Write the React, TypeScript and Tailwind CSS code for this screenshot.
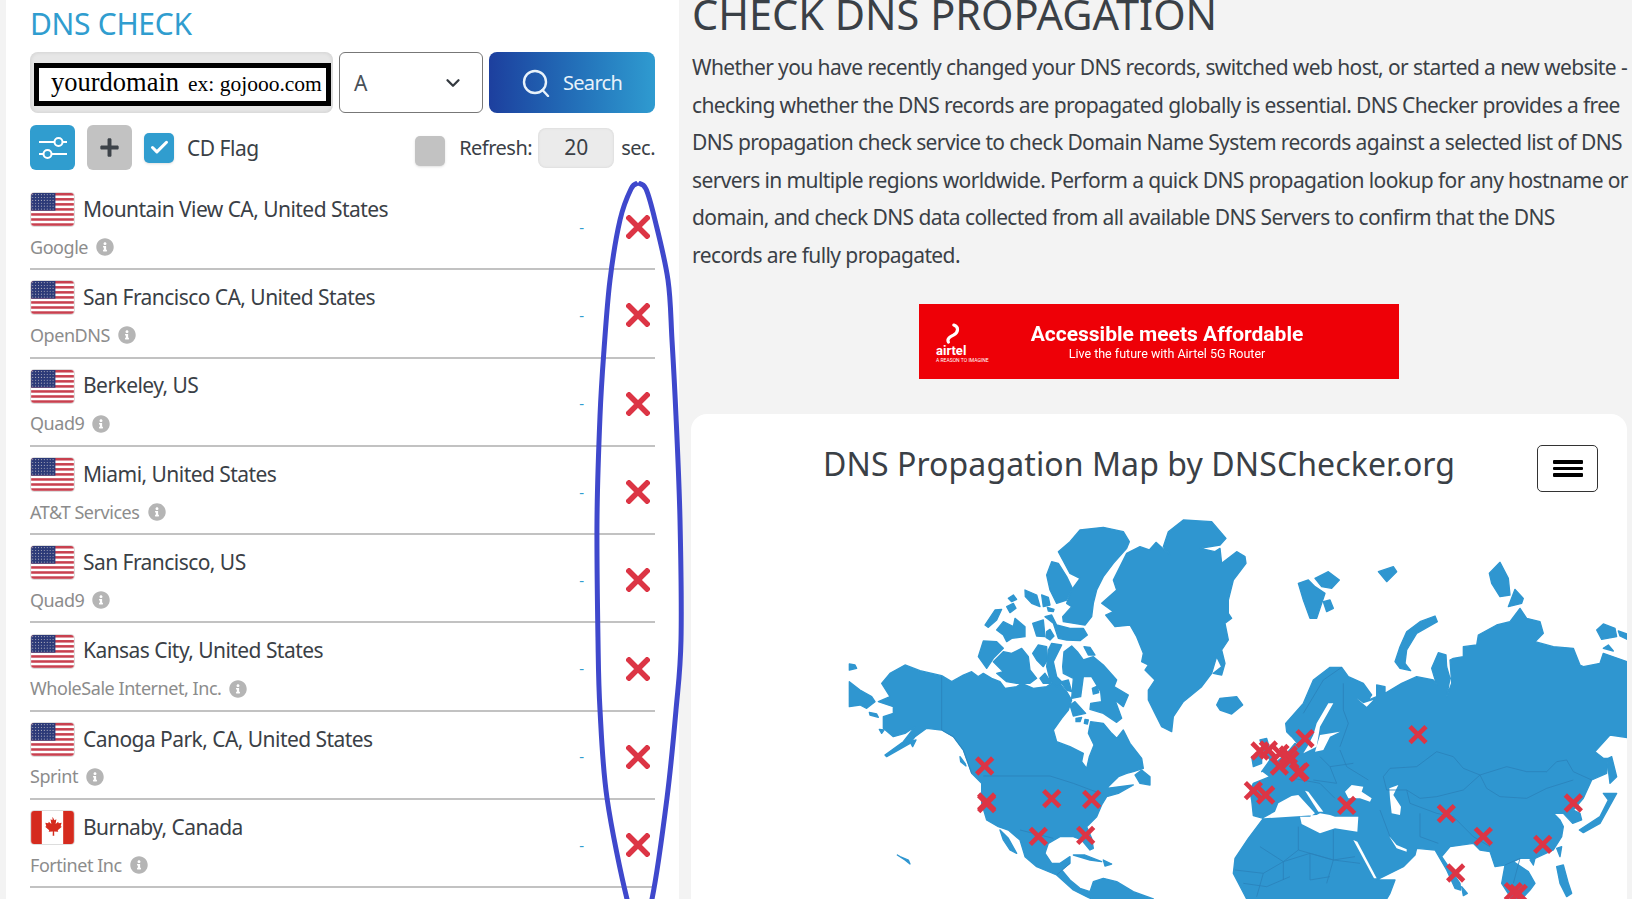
import { Check, ChevronDown } from 'lucide-react'
import { FaInfoCircle, FaPlus } from 'react-icons/fa'

const rows = [
  { flag: 'us', name: 'Mountain View CA, United States', org: 'Google' },
  { flag: 'us', name: 'San Francisco CA, United States', org: 'OpenDNS' },
  { flag: 'us', name: 'Berkeley, US', org: 'Quad9' },
  { flag: 'us', name: 'Miami, United States', org: 'AT&T Services' },
  { flag: 'us', name: 'San Francisco, US', org: 'Quad9' },
  { flag: 'us', name: 'Kansas City, United States', org: 'WholeSale Internet, Inc.' },
  { flag: 'us', name: 'Canoga Park, CA, United States', org: 'Sprint' },
  { flag: 'ca', name: 'Burnaby, Canada', org: 'Fortinet Inc' },
]

const stars: number[][] = []
for (let y = 0; y < 6; y++) for (let x = 0; x < 8; x++) stars.push([1.6 + x * 3, 1.6 + y * 3])

const UsFlag = () => (
  <svg viewBox="0 0 44 34" className="w-[45px] h-[35px] rounded-[4px] border border-[#ddd] shrink-0">
    <rect width="44" height="34" fill="#fff" />
    {[0, 5.2, 10.4, 15.6, 20.8, 26, 31.2].map((y) => (
      <rect key={y} y={y} width="44" height="2.6" fill="#c8404f" />
    ))}
    <rect width="25" height="18.2" fill="#2c3a78" />
    {stars.map(([x, y]) => (
      <circle key={`${x}-${y}`} cx={x} cy={y} r="0.6" fill="#aab" />
    ))}
  </svg>
)

const CaFlag = () => (
  <svg viewBox="0 0 44 34" className="w-[45px] h-[35px] rounded-[4px] border border-[#ddd] shrink-0">
    <rect width="44" height="34" fill="#fff" />
    <rect width="11" height="34" fill="#d52b1e" />
    <rect x="33" width="11" height="34" fill="#d52b1e" />
    <path d="M22 6l2 3.5 2-1-.8 5 2.6-2.4.6 1.6 3-.5-1 3.4 1.2.7-4.2 3.6.5 1.6-4.2-.5.1 4.5h-1.6l.1-4.5-4.2.5.5-1.6-4.2-3.6 1.2-.7-1-3.4 3 .5.6-1.6 2.6 2.4-.8-5 2 1z" fill="#d52b1e" />
  </svg>
)

const RedX = () => (
  <svg viewBox="0 0 24 24" className="w-[24px] h-[24px]">
    <path d="M3 3L21 21M21 3L3 21" stroke="#dc3545" strokeWidth="5.5" strokeLinecap="square" />
  </svg>
)

const northAmerica = [
  '125,520 150,490 195,465 240,482 305,497 335,515 370,495 395,485 415,500 430,490 455,505 480,515 495,535 530,530 545,520 580,535 620,530 650,510 680,545 695,570 685,600 665,625 640,660 650,695 690,710 730,730 725,755 740,775 748,740 762,705 745,670 752,635 790,640 815,670 830,685 850,660 870,700 905,745 910,775 880,785 860,790 835,800 815,820 800,835 880,825 835,850 800,860 785,885 770,920 740,950 755,985 760,1015 750,1020 725,990 700,980 660,980 625,1000 615,1030 635,1060 660,1060 690,1040 690,1060 665,1080 690,1110 720,1135 750,1145 760,1115 790,1105 830,1115 880,1145 940,1167 755,1167 740,1160 700,1140 650,1095 590,1070 555,1040 540,990 505,960 475,950 440,930 425,880 425,820 395,790 370,720 340,680 305,660 260,655 225,680 210,700 140,740 135,735 190,695 225,650 195,670 160,680 130,655 130,620 160,610 160,590 115,575 150,560',
  '668,470 672,425 695,408 712,425 730,450 760,440 790,465 830,510 822,530 865,555 850,590 825,570 845,625 830,637 790,610 750,598 752,580 785,575 782,545 755,500 730,500 722,560 695,565 700,505 670,490',
  '690,585 705,575 737,610 700,618',
  '708,625 725,622 720,635 708,635',
  '735,628 745,630 742,642 733,640',
  '757,535 772,528 776,548 760,552',
  '460,455 490,425 515,430 545,415 565,440 570,480 590,505 570,520 530,520 500,515 470,490 490,485',
  '415,440 430,393 470,395 490,415 460,445 440,475',
  '578,430 595,405 620,410 622,450 610,470 590,450',
  '625,420 635,400 665,405 640,455 650,500 665,515 685,510 695,545 680,540 665,520 650,530 630,510 620,470',
  '600,505 615,490 635,520 610,520',
  '655,125 690,95 720,60 790,52 850,65 868,95 860,115 820,160 790,200 770,240 760,280 755,320 735,345 670,335 668,320 695,290 680,280 695,240 720,205 690,190',
  '620,195 635,155 655,160 680,200 697,235 680,270 650,280 630,240',
  '505,265 520,255 530,268 515,275',
  '500,290 520,280 528,295 510,308',
  '555,240 590,255 600,290 575,280 556,260',
  '605,255 625,262 630,285 610,290',
  '622,292 642,298 640,305 625,303',
  '435,345 465,300 485,298 470,330 445,352',
  '470,360 490,335 520,350 525,325 555,350 555,380 515,385 500,395 490,375',
  '615,320 635,315 650,345 690,355 730,355 742,375 720,392 680,390 655,385 640,340',
  '578,340 610,330 615,380 590,378',
  '620,365 630,358 642,378 630,390 618,382',
  '732,410 750,412 765,435 745,435',
  '785,280 830,240 820,210 860,130 900,110 928,120 948,97 990,135 970,110 985,65 1030,30 1115,35 1158,85 1140,105 1080,115 1125,125 1140,115 1145,160 1190,125 1215,140 1218,160 1180,210 1165,270 1165,310 1175,325 1155,340 1165,390 1145,420 1155,460 1145,495 1120,490 1145,470 1130,440 1115,490 1085,530 1030,575 1000,620 995,665 965,650 945,610 925,570 925,540 945,510 915,480 925,465 905,455 910,430 890,380 870,345 825,350 797,315 820,305',
  '1130,585 1140,565 1190,560 1208,585 1175,612 1140,600',
  '28,515 60,540 95,560 105,575 80,595 60,585 28,590',
  '28,462 45,465 50,475 28,480',
  '88,607 110,612 115,622 90,615',
  '172,1035 180,1040 205,1050 210,1062 195,1050',
  '360,740 375,760 378,768 362,755',
  '480,960 505,985 530,1030 510,1020 490,990',
  '700,1035 735,1035 785,1055 750,1050',
  '790,1050 815,1062 795,1068',
  '885,795 905,780 930,800 930,825 900,820',
  '118,658 132,660 125,670',
  '210,695 228,690 218,710',
]

const naBorders = [
  '305,500 305,660 340,680 370,720 395,790',
  '430,798 630,798 700,820 780,850',
  '540,960 640,985',
  '650,1095 690,1060',
]

const naMarks = [
  [434, 768],
  [440, 876],
  [440, 881],
  [635, 866],
  [755, 868],
  [595, 979],
  [737, 976],
]

const eurasia = [
  '197,520 250,460 280,390 330,352 365,352 385,380 430,400 455,435 445,450 470,440 470,405 495,410 495,430 545,400 590,380 640,390 650,405 635,355 655,308 678,315 680,350 690,385 680,440 695,400 690,330 700,325 730,320 730,290 770,285 775,255 830,225 870,215 900,175 920,205 960,215 970,250 945,275 1000,290 1060,295 1080,345 1090,350 1140,340 1150,310 1236,340 1236,565 1170,555 1125,605 1150,625 1165,625 1160,670 1115,690 1090,745 1060,780 1080,790 1085,810 1058,820 1030,790 1000,790 1020,810 1030,830 1025,860 1000,900 945,925 900,925 880,935 925,965 945,1000 930,1020 905,1047 875,1047 845,1000 855,945 825,950 810,905 780,900 760,880 690,890 665,920 720,1000 722,1020 705,1015 680,960 645,900 590,895 585,915 550,950 470,990 525,990 510,1030 500,1047 80,1047 40,970 45,925 85,865 130,805 100,797 95,750 90,725 100,700 150,680 130,665 165,640 200,610 225,580 250,600 215,560 200,545',
  '120,570 140,565 150,600 170,650 125,665 150,630 130,600',
  '95,620 125,610 125,640 100,650',
  '235,100 265,90 285,110 315,130 290,205 270,205 250,150',
  '285,85 325,65 358,90 335,115 305,110',
  '310,155 330,150 340,175 320,185',
  '475,65 520,50 530,65 500,95',
  '808,70 840,37 865,85 870,135 840,140 815,100',
  '865,170 885,118 910,145 905,160',
  '525,335 540,290 560,245 600,215 645,198 652,215 590,250 560,300 555,340 572,362 540,355',
  '1130,240 1150,222 1185,235 1190,260 1145,268',
  '1195,243 1230,255 1222,268 1200,258',
  '1150,295 1165,285 1180,303',
  '1078,840 1140,800 1165,750 1150,730 1190,730 1165,775 1140,820 1090,848',
  '1165,625 1175,620 1190,680 1170,700 1165,660',
  '1010,895 1025,890 1020,920',
  '1010,950 1030,945 1045,1000 1055,1030 1040,1040 1020,1000',
  '725,1010 742,1030 730,1037',
  '930,930 945,925 940,945',
  '222,745 232,745 230,775 222,775',
]

const waters = [
  '130,805 165,785 175,760 215,738 235,735 285,790 270,800 240,800 245,822 300,850 345,835 412,845 415,800 345,800 330,795 300,790 290,795',
  '255,722 265,725 310,785 295,785',
  '375,725 395,705 430,710 425,725 455,745 450,755 420,745 385,745',
  '508,715 535,705 520,735 543,770 540,795 515,790 510,745',
  '400,870 412,875 470,985 462,985',
  '507,858 530,885 560,898 560,905 530,895',
  '250,610 290,590 300,530 340,460 325,460 290,520 280,555 262,590',
  '300,555 360,545 330,560 310,600 285,605',
  '410,445 440,470 460,450 430,460',
]

const euBorders = [
  '490,680 510,655 590,650 650,605 700,620 730,655 780,675 860,650 920,665 980,665 1010,635 1040,630 1060,665 1115,690',
  '780,675 800,715 840,740 920,745 980,715 1060,690',
  '490,680 500,720 560,720 600,745 650,740 730,720 780,675',
  '560,720 570,760 650,790',
  '650,790 700,800 760,860 810,890',
  '600,790 600,860 655,880',
  '480,780 510,860',
  '360,600 380,650 445,690',
  '300,620 330,650 350,700 280,690',
  '220,685 300,700 345,745',
  '250,490 310,390 365,352',
  '370,400 370,480 385,520 360,590',
  '330,650 400,640',
  '235,830 235,900 340,930 340,840',
  '120,890 190,935 270,910 340,930 405,920',
  '45,960 130,970 190,935',
  '235,900 190,935 190,990',
  '270,910 270,990 330,980',
  '340,930 320,1000',
  '420,940 340,930',
  '130,970 110,1040',
  '70,1000 140,1010 210,980',
  '855,945 900,925 880,1000',
]

const euMarks = [
  [594, 554],
  [255, 566],
  [120, 603],
  [145, 600],
  [180, 610],
  [205, 615],
  [210, 630],
  [178, 648],
  [235, 668],
  [240, 665],
  [100, 722],
  [137, 735],
  [380, 766],
  [679, 791],
  [790, 859],
  [968, 883],
  [1060, 759],
  [707, 969],
  [880, 1025],
  [895, 1030],
]

const MapMark = ({ x, y }: { x: number; y: number }) => (
  <path
    d={`M${x - 24} ${y - 24}L${x + 24} ${y + 24}M${x + 24} ${y - 24}L${x - 24} ${y + 24}`}
    stroke="#dc3545"
    strokeWidth="14"
  />
)

// ellipse somebody painted over the results column
const ring = [
  [638, 183], [631, 189], [620, 220], [610, 280], [604, 350], [600, 416], [597, 520], [598, 640],
  [600, 710], [607, 798], [627, 899], [640, 930], [652, 899], [667, 798], [676, 710], [681, 640],
  [680, 520], [676, 416], [672, 340], [668, 280], [655, 220], [646, 189], [638, 183],
]

const ringPath = () => {
  let d = `M${ring[0][0]} ${ring[0][1]}`
  for (let i = 0; i < ring.length - 1; i++) {
    const p0 = ring[Math.max(i - 1, 0)]
    const p1 = ring[i]
    const p2 = ring[i + 1]
    const p3 = ring[Math.min(i + 2, ring.length - 1)]
    d += `C${p1[0] + (p2[0] - p0[0]) / 6} ${p1[1] + (p2[1] - p0[1]) / 6} ${p2[0] - (p3[0] - p1[0]) / 6} ${p2[1] - (p3[1] - p1[1]) / 6} ${p2[0]} ${p2[1]}`
  }
  return d
}

export default function App() {
  return (
    <div className="relative h-[899px] overflow-hidden flex bg-[#f3f3f3] text-[#3a4046] font-['Noto_Sans',sans-serif]">
      <div className="w-[673px] ml-[6px] shrink-0 bg-white pl-6 pr-6">
        <h2 className="h-[47px] leading-[47px] mb-[5px] text-[30px] font-normal text-[#309dcf] tracking-[-0.3px]">DNS CHECK</h2>

        <div className="flex gap-[6px] h-[61px]">
          <div className="w-[303px] bg-[#e6e6e6] rounded-lg pt-[11px] pl-[4px] pr-[2px] shadow-[inset_0_0_4px_rgba(0,0,0,0.12)]">
            <div className="h-[43px] border-[5px] border-black bg-white flex items-center pl-[12px] pb-[3px] font-['Liberation_Serif',serif] text-black whitespace-nowrap">
              <span className="text-[26.5px]">yourdomain</span>
              <span className="text-[21.5px] ml-[9px] mt-[2px]">ex: gojooo.com</span>
            </div>
          </div>
          <div className="w-[144px] bg-white border border-[#777] rounded-md flex items-center justify-between pl-[14px] pr-[18px]">
            <span className="text-[21px] text-[#495057] mt-[2px]">A</span>
            <ChevronDown size={22} strokeWidth={2.5} className="text-[#343a40]" />
          </div>
          <button className="w-[166px] rounded-lg bg-gradient-to-r from-[#1d3f9e] to-[#2f9bd0] text-[#e8f2fa] flex items-center pl-[33px] text-[20px] tracking-[-0.7px]">
            <svg viewBox="0 0 28 28" className="w-[28px] h-[28px] mr-[13px]" fill="none" stroke="currentColor" strokeWidth="2.4">
              <circle cx="13" cy="13" r="11" />
              <path d="M20.5 21L26 27" strokeLinecap="round" />
            </svg>
            Search
          </button>
        </div>

        <div className="flex items-center mt-[12px] h-[45px]">
          <div className="w-[45px] h-[45px] rounded-md bg-[#309dcf] flex items-center justify-center">
            <svg viewBox="0 0 28 24" className="w-[28px] h-[24px]" fill="none" stroke="#fff" strokeWidth="2">
              <path d="M0 6H15M24 6H28M0 18H4M13 18H28" />
              <circle cx="19.5" cy="6" r="4" />
              <circle cx="8.5" cy="18" r="4" />
            </svg>
          </div>
          <div className="w-[45px] h-[45px] ml-[12px] rounded-md bg-[#c2c2c2] flex items-center justify-center">
            <FaPlus size={21} className="text-[#3d4349]" />
          </div>
          <div className="w-[30px] h-[30px] ml-[12px] rounded-[5px] bg-[#309dcf] shadow-sm flex items-center justify-center">
            <Check size={21} strokeWidth={3.5} className="text-white" />
          </div>
          <span className="ml-[13px] mt-[2px] text-[21px] tracking-[-0.5px]">CD Flag</span>
          <div className="ml-auto w-[30px] h-[30px] mt-[7px] rounded-[5px] bg-[#c2c2c2] shadow-sm" />
          <span className="ml-[14px] mt-px text-[20px] tracking-[-0.5px]">Refresh:</span>
          <div className="w-[76px] h-[40px] ml-[6px] mt-px rounded-lg bg-[#ebebeb] shadow-[inset_0_0_3px_rgba(0,0,0,0.1)] flex items-center justify-center text-[21px]">20</div>
          <span className="ml-[7px] mt-px text-[20px] tracking-[-0.5px]">sec.</span>
        </div>

        <div className="mt-[12px]">
          {rows.map((row) => (
            <div key={row.name} className="h-[88.3px] border-b-2 border-[#c2c2c2] flex items-center pt-[2px]">
              <div className="flex flex-col">
                <div className="flex items-center h-[35px]">
                  {row.flag === 'us' ? <UsFlag /> : <CaFlag />}
                  <span className="ml-[8px] text-[21px] tracking-[-0.55px]">{row.name}</span>
                </div>
                <div className="flex items-center h-[26px] mt-[7px] text-[#8c8c8c] text-[18px] tracking-[-0.45px]">
                  {row.org}
                  <FaInfoCircle size={18} className="ml-[8px] text-[#b5b5b5]" />
                </div>
              </div>
              <div className="ml-auto flex items-center mt-[2px]">
                <span className="text-[15px] text-[#309dcf] leading-none">-</span>
                <span className="w-[42px]" />
                <RedX />
                <span className="w-[5px]" />
              </div>
            </div>
          ))}
        </div>
      </div>

      <div className="flex-1 pl-[12px] pr-[5px] min-w-0">
        <h1 className="h-[40px] -mt-[6px] pl-px leading-[40px] text-[41.5px] font-normal whitespace-nowrap">CHECK DNS PROPAGATION</h1>
        <p className="mt-[15px] pl-px text-[21px] leading-[37.5px] tracking-[-0.6px] whitespace-nowrap">
          Whether you have recently changed your DNS records, switched web host, or started a new website -<br />
          checking whether the DNS records are propagated globally is essential. DNS Checker provides a free<br />
          DNS propagation check service to check Domain Name System records against a selected list of DNS<br />
          servers in multiple regions worldwide. Perform a quick DNS propagation lookup for any hostname or<br />
          domain, and check DNS data collected from all available DNS Servers to confirm that the DNS<br />
          records are fully propagated.
        </p>

        <div className="mt-[30px] mx-auto w-[480px] h-[75px] bg-[#ee0007] flex text-white font-['Roboto',sans-serif]">
          <div className="w-[112px] pl-[17px] pt-[19px] flex flex-col">
            <svg viewBox="0 0 20 24" className="w-[18px] h-[22px] ml-[7px]" fill="none" stroke="#fff" strokeWidth="3.5" strokeLinecap="round">
              <path d="M12 2C18 4 17 10 12 13C8 15 4 17 6 21" />
            </svg>
            <span className="text-[13px] leading-[11px] font-bold">airtel</span>
            <span className="text-[5px] leading-[8px] whitespace-nowrap">A REASON TO IMAGINE</span>
          </div>
          <div className="w-[272px] flex flex-col items-center pt-[17px] whitespace-nowrap blur-[0.3px]">
            <span className="text-[21px] leading-[26px] font-bold">Accessible meets Affordable</span>
            <span className="text-[12.5px] leading-[15px] -mt-px">Live the future with Airtel 5G Router</span>
          </div>
        </div>

        <div className="mt-[35px] w-[936px] h-[600px] bg-white rounded-2xl">
          <div className="flex items-start justify-between pl-[132px] pr-[29px] pt-[31px]">
            <h3 className="text-[32px] leading-[47px] -mt-[5px] font-normal tracking-[0.1px] whitespace-nowrap">DNS Propagation Map by DNSChecker.org</h3>
            <div className="w-[61px] h-[47px] border border-[#333] rounded-[5px] flex flex-col items-center justify-center gap-[3px]">
              <div className="w-[30px] h-[3.5px] bg-black rounded-[1px]" />
              <div className="w-[30px] h-[3.5px] bg-black rounded-[1px]" />
              <div className="w-[30px] h-[3.5px] bg-black rounded-[1px]" />
            </div>
          </div>
          <svg viewBox="691 492 936 407" className="block w-[936px] h-[407px]">
            <g transform="translate(840 510) scale(0.33333)">
              {northAmerica.map((p) => (
                <polygon key={p} points={p} fill="#2f96d0" stroke="#2f96d0" strokeWidth="4" strokeLinejoin="round" />
              ))}
              {naBorders.map((p) => (
                <polyline key={p} points={p} fill="none" stroke="#2a82bb" strokeWidth="2.5" />
              ))}
              {naMarks.map(([x, y]) => (
                <MapMark key={`${x}-${y}`} x={x} y={y} />
              ))}
            </g>
            <g transform="translate(1220 550) scale(0.33333)">
              {eurasia.map((p) => (
                <polygon key={p} points={p} fill="#2f96d0" stroke="#2f96d0" strokeWidth="4" strokeLinejoin="round" />
              ))}
              {waters.map((p) => (
                <polygon key={p} points={p} fill="#fff" />
              ))}
              {euBorders.map((p) => (
                <polyline key={p} points={p} fill="none" stroke="#2a82bb" strokeWidth="2.5" />
              ))}
              {euMarks.map(([x, y]) => (
                <MapMark key={`${x}-${y}`} x={x} y={y} />
              ))}
            </g>
          </svg>
        </div>
      </div>

      <svg className="absolute inset-0 w-[1632px] h-[899px] pointer-events-none" viewBox="0 0 1632 899" fill="none">
        <path d={ringPath()} stroke="#3f48cc" strokeWidth="5" />
      </svg>
    </div>
  )
}
